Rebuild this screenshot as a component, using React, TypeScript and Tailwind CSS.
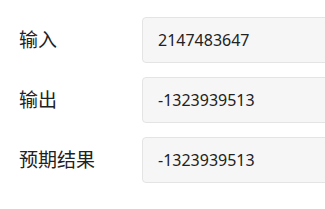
const rows = [
  { label: "输入", value: "2147483647" },
  { label: "输出", value: "-1323939513" },
  { label: "预期结果", value: "-1323939513" },
];

export default function App() {
  return (
    <div
      className="h-[209px] w-[325px] overflow-hidden bg-white pt-[17px] pl-[19px]"
      style={{ fontFamily: '"Noto Sans", "Noto Sans CJK SC", sans-serif' }}
    >
      <div className="flex flex-col gap-[14px]">
        {rows.map((r) => (
          <div key={r.label} className="flex items-center">
            <div className="w-[123px] shrink-0 text-[19px] text-[#222]">{r.label}</div>
            <div className="flex h-[46px] w-[300px] shrink-0 items-center rounded-[4px] border border-[#e4e4e4] bg-[#f6f6f6] pl-[15px] text-[16px] text-[#222]">
              {r.value}
            </div>
          </div>
        ))}
      </div>
    </div>
  );
}
